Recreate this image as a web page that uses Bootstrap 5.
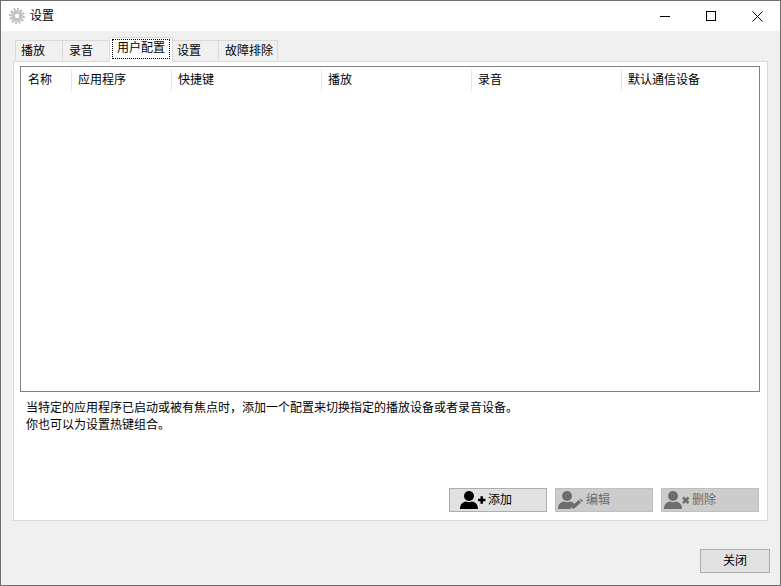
<!DOCTYPE html>
<html lang="zh-CN">
<head>
<meta charset="utf-8">
<title>设置</title>
<link href="https://cdn.jsdelivr.net/npm/bootstrap@5.3.0/dist/css/bootstrap.min.css" rel="stylesheet">
<style>
html,body{margin:0;height:586px;overflow:hidden;background:#f0f0f0}
body{font-family:"Liberation Sans","Noto Sans CJK SC",sans-serif;font-size:12px;line-height:16px;color:#000}
.win{width:781px;height:586px;border:1px solid #707070;background:#f0f0f0;display:flex;flex-direction:column}
.tbar{height:30px;background:#fff;flex:none}
.tbar-gear{margin-left:8px;margin-right:5px}
.wbtn{width:46px;height:30px;display:flex;align-items:center;justify-content:center}
.main{flex:1;display:flex;flex-direction:column;padding:6px 12px 0 12px;min-height:0}
.tabrow{height:25px;display:flex;align-items:flex-end;padding-left:2px;flex:none;position:relative;z-index:2;margin-bottom:-1px}
.tabx{height:22px;border:1px solid #d9d9d9;background:#f0f0f0;display:flex;align-items:center;margin-right:-1px;padding:0 0 0 6px}
.tabx-on{height:25px;background:#fff;border-bottom-color:#fff;position:relative;z-index:3;padding:2px 2px 3px}
.tabx-on span{display:block;width:100%;border:1px dotted #000;padding:0 0 0 4px;line-height:17px;height:20px}
.tw-a{width:48px}.tw-b{padding-left:5px}.tw-c{width:64px}.tw-d{width:47px;padding-left:4px}.tw-e{width:60px}
.panelx{height:460px;background:#fff;border:1px solid #d9d9d9;padding:4px 7px 0 6px;display:flex;flex-direction:column;flex:none}
.listx{height:326px;border:1px solid #828282;flex:none;background:#fff}
.hcell{height:22px;margin-top:2px;padding-left:6px;display:flex;align-items:center;border-right:1px solid #e5e5e5;flex:none}
.hcell-last{border-right:0}
.cw-1{width:51px;padding-left:7px}.cw-2{width:100px}.cw-3{width:150px}
.descx{margin:8px 0 0 6px;line-height:17px}
.descx p{margin:0}
.btnrow{margin-top:auto;margin-bottom:8px;display:flex;justify-content:flex-end;gap:8px;padding-right:1px}
.abtn{width:98px;height:24px;border:1px solid #adadad;background:#e1e1e1;display:flex;align-items:center;padding:0 0 0 10px;color:#000;border-radius:0;font-size:12px;line-height:16px}
.abtn:disabled{background:#ccc;border-color:#bfbfbf;color:#6d6d6d;opacity:1;padding-left:2px}
.abtn svg{flex:none;margin-right:2px}
.foot{height:64px;display:flex;justify-content:flex-end;flex:none;padding-top:28px;margin-right:-2px}
.closebtn{width:70px;height:24px;border:1px solid #adadad;background:#e1e1e1;border-radius:0;padding:0;color:#000;font-size:12px;line-height:16px}
</style>
</head>
<body>
<div class="win">
  <div class="tbar d-flex align-items-center">
    <svg class="tbar-gear" width="16" height="16" viewBox="0 0 16 16" aria-hidden="true">
      <circle cx="8" cy="8" r="6.9" fill="none" stroke="#b5b5b5" stroke-width="2" stroke-dasharray="2 1.6"/>
      <circle cx="8" cy="8" r="4.6" fill="none" stroke="#c4c4c4" stroke-width="2.8"/>
      <circle cx="8" cy="8" r="6" fill="none" stroke="#d8d8d8" stroke-width=".6"/>
      <circle cx="8" cy="8" r="2.900" fill="#fff" stroke="#9f9f9f" stroke-width=".8"/>
    </svg>
    <span>设置</span>
    <div class="d-flex ms-auto">
      <div class="wbtn"><svg width="10" height="10" viewBox="0 0 10 10"><path d="M0 5.500h10" stroke="#000" fill="none"/></svg></div>
      <div class="wbtn"><svg width="10" height="10" viewBox="0 0 10 10"><rect x=".5" y=".5" width="9" height="9" stroke="#000" fill="none"/></svg></div>
      <div class="wbtn"><svg width="11" height="11" viewBox="0 0 11 11"><path d="M.5.5l10 10M10.500.5l-10 10" stroke="#000" fill="none"/></svg></div>
    </div>
  </div>
  <div class="main">
    <div class="tabrow">
      <div class="tabx tw-a tw-b">播放</div>
      <div class="tabx tw-a">录音</div>
      <div class="tabx tabx-on tw-c"><span>用户配置</span></div>
      <div class="tabx tw-d">设置</div>
      <div class="tabx tw-e">故障排除</div>
    </div>
    <div class="panelx">
      <div class="listx">
        <div class="d-flex">
          <div class="hcell cw-1">名称</div>
          <div class="hcell cw-2">应用程序</div>
          <div class="hcell cw-3">快捷键</div>
          <div class="hcell cw-3">播放</div>
          <div class="hcell cw-3">录音</div>
          <div class="hcell hcell-last">默认通信设备</div>
        </div>
      </div>
      <div class="descx">
        <p>当特定的应用程序已启动或被有焦点时，添加一个配置来切换指定的播放设备或者录音设备。</p>
        <p>你也可以为设置热键组合。</p>
      </div>
      <div class="btnrow">
        <button type="button" class="btn abtn">
          <svg width="26" height="20" viewBox="0 0 26 20"><circle cx="9" cy="6" r="5" fill="#000"/><path d="M0 19c0-4.500 2.500-7 6-7.500 2 1 4 1 6 0 3.500.5 6 3 6 7.500z" fill="#000"/><path d="M18 10h7.500M21.700 6.200v7.600" stroke="#000" stroke-width="2.500" fill="none"/></svg>
          添加
        </button>
        <button type="button" class="btn abtn" disabled>
          <svg width="26" height="20" viewBox="0 0 26 20"><circle cx="9" cy="6" r="5" fill="#6d6d6d"/><path d="M0 19c0-4.500 2.500-7 6-7.500 2 1 4 1 6 0 1.800.3 3.300 1 4.400 2.300L12 19z" fill="#6d6d6d"/><path d="M13.500 19l1-3.500 6-5.500 2.500 2.500-6 5.500z" fill="#6d6d6d"/><path d="M21.500 9.500l1-1 2.500 2.500-1 1z" fill="#6d6d6d"/></svg>
          编辑
        </button>
        <button type="button" class="btn abtn" disabled>
          <svg width="26" height="20" viewBox="0 0 26 20"><circle cx="9" cy="6" r="5" fill="#6d6d6d"/><path d="M0 19c0-4.500 2.500-7 6-7.500 2 1 4 1 6 0 3.500.5 6 3 6 7.500z" fill="#6d6d6d"/><path d="M19 7.500l5.500 5.500M24.500 7.500l-5.500 5.500" stroke="#6d6d6d" stroke-width="2.500" fill="none"/></svg>
          删除
        </button>
      </div>
    </div>
    <div class="foot">
      <button type="button" class="btn closebtn">关闭</button>
    </div>
  </div>
</div>
<script src="https://cdn.jsdelivr.net/npm/bootstrap@5.3.0/dist/js/bootstrap.bundle.min.js"></script>
</body>
</html>
